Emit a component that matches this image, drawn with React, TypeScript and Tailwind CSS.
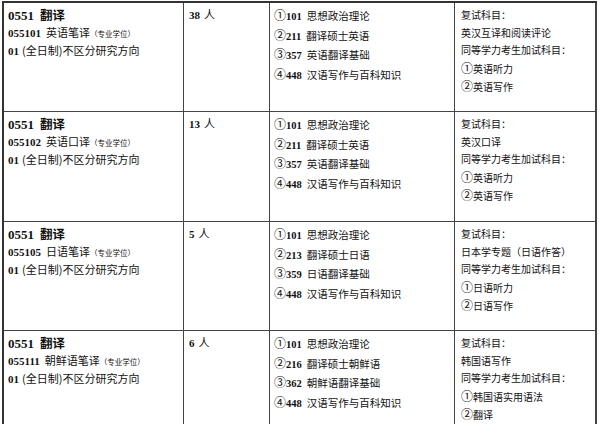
import React from "react";

type Row = {
  code: string;
  name: string;
  dir: string;
  num: string;
  exams: [string, string, string][];
  retest: string[];
  h: string;
};

const rows: Row[] = [
  {
    code: "055101",
    name: "英语笔译",
    dir: "01",
    num: "38",
    exams: [
      ["①", "101", "思想政治理论"],
      ["②", "211", "翻译硕士英语"],
      ["③", "357", "英语翻译基础"],
      ["④", "448", "汉语写作与百科知识"],
    ],
    retest: ["复试科目：", "英汉互译和阅读评论", "同等学力考生加试科目：", "①英语听力", "②英语写作"],
    h: "h-[109px]",
  },
  {
    code: "055102",
    name: "英语口译",
    dir: "01",
    num: "13",
    exams: [
      ["①", "101", "思想政治理论"],
      ["②", "211", "翻译硕士英语"],
      ["③", "357", "英语翻译基础"],
      ["④", "448", "汉语写作与百科知识"],
    ],
    retest: ["复试科目：", "英汉口译", "同等学力考生加试科目：", "①英语听力", "②英语写作"],
    h: "h-[110px]",
  },
  {
    code: "055105",
    name: "日语笔译",
    dir: "01",
    num: "5",
    exams: [
      ["①", "101", "思想政治理论"],
      ["②", "213", "翻译硕士日语"],
      ["③", "359", "日语翻译基础"],
      ["④", "448", "汉语写作与百科知识"],
    ],
    retest: ["复试科目：", "日本学专题（日语作答）", "同等学力考生加试科目：", "①日语听力", "②日语写作"],
    h: "h-[109px]",
  },
  {
    code: "055111",
    name: "朝鲜语笔译",
    dir: "01",
    num: "6",
    exams: [
      ["①", "101", "思想政治理论"],
      ["②", "216", "翻译硕士朝鲜语"],
      ["③", "362", "朝鲜语翻译基础"],
      ["④", "448", "汉语写作与百科知识"],
    ],
    retest: ["复试科目：", "韩国语写作", "同等学力考生加试科目：", "①韩国语实用语法", "②翻译"],
    h: "h-[110px]",
  },
];

const circled = "①②③④";

function RetestLine({ t }: { t: string }) {
  if (circled.includes(t[0])) {
    return (
      <>
        <span className="text-[12px]">{t[0]}</span>
        {t.slice(1)}
      </>
    );
  }
  return <>{t}</>;
}

export default function App() {
  return (
    <div className="w-[600px] h-[424px] overflow-hidden bg-white pt-px pl-[2px] text-[#111] font-['Liberation_Serif','Noto_Sans_CJK_SC',serif]">
      <div className="border-t-2 border-l-2 border-[#333] w-[595px]">
        {rows.map((r, i) => (
          <div key={i} className={`grid grid-cols-[180px_86px_185px_142px] ${r.h}`}>
            <div className="border-r border-b border-[#444] pl-[4px] pt-[3px]">
              <div className="leading-[17px] text-[13px] font-bold">
                0551<span className="ml-[6px] font-['Noto_Sans_CJK_SC',sans-serif] text-[12.5px]">翻译</span>
              </div>
              <div className="leading-[17px] text-[11px]">
                <span className="font-bold">{r.code}</span>
                <span className="ml-[5px] font-['Noto_Sans_CJK_SC',sans-serif]">{r.name}</span>
                <span className="font-['Noto_Sans_CJK_SC',sans-serif] text-[7.5px]">（专业学位）</span>
              </div>
              <div className="leading-[17px] text-[11px]">
                <span className="font-bold">{r.dir}</span>
                <span className="ml-[3px] font-['Noto_Sans_CJK_SC',sans-serif]">(全日制)不区分研究方向</span>
              </div>
            </div>
            <div className="border-r border-b border-[#444] pl-[5px] pt-[3px] leading-[17px] text-[11px]">
              <span className="font-bold">{r.num}</span>
              <span className="ml-[4px] font-['Noto_Sans_CJK_SC',sans-serif]">人</span>
            </div>
            <div className="border-r border-b border-[#444] pl-[4px] pt-[3px]">
              {r.exams.map((e, j) => (
                <div key={j} className="leading-[17.5px] text-[10.5px] whitespace-nowrap">
                  <span className="font-['Noto_Sans_CJK_SC',sans-serif] text-[12px]">{e[0]}</span>
                  <span className="font-bold">{e[1]}</span>
                  <span className="ml-[5px] font-['Noto_Sans_CJK_SC',sans-serif]">{e[2]}</span>
                </div>
              ))}
            </div>
            <div className="border-r-2 border-b border-[#444] pl-[6px] pt-[3px]">
              {r.retest.map((t, j) => (
                <div key={j} className="leading-[17.5px] text-[10px] whitespace-nowrap font-['Noto_Sans_CJK_SC',sans-serif]">
                  <RetestLine t={t} />
                </div>
              ))}
            </div>
          </div>
        ))}
      </div>
    </div>
  );
}
